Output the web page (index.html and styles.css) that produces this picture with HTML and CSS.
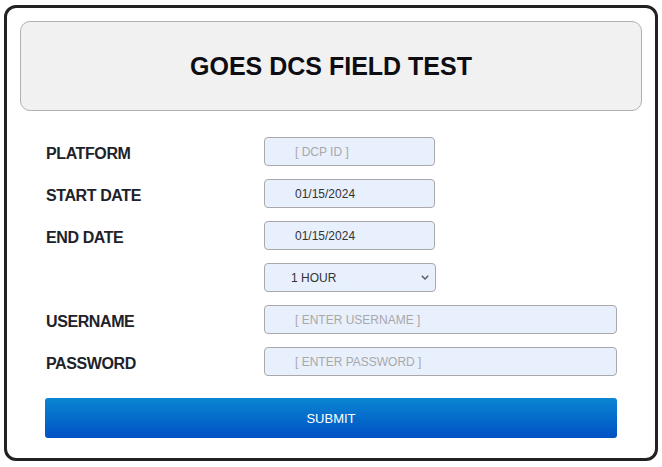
FILE: index.html
```html
<!DOCTYPE html>
<html lang="en">
<head>
<meta charset="utf-8">
<title>GOES DCS Field Test</title>
<link rel="stylesheet" href="styles.css">
</head>
<body>
<div class="card">
  <div class="header">
    <h1 class="title">GOES DCS FIELD TEST</h1>
  </div>
  <form class="form">
    <label class="label" for="platform">PLATFORM</label>
    <input class="field short" id="platform" type="text" placeholder="[ DCP ID ]">

    <label class="label" for="start">START DATE</label>
    <input class="field short" id="start" type="text" value="01/15/2024">

    <label class="label" for="end">END DATE</label>
    <input class="field short" id="end" type="text" value="01/15/2024">

    <span class="label"></span>
    <span class="select-wrap">
      <select class="field select" id="duration">
        <option>1 HOUR</option>
        <option>2 HOURS</option>
        <option>6 HOURS</option>
        <option>12 HOURS</option>
        <option>24 HOURS</option>
      </select>
      <svg class="chevron" width="8" height="5" viewBox="0 0 8 5" aria-hidden="true"><path d="M0.8 0.8 L4 4 L7.2 0.8" fill="none" stroke="#555" stroke-width="1.3"/></svg>
    </span>

    <label class="label" for="user">USERNAME</label>
    <input class="field wide" id="user" type="text" placeholder="[ ENTER USERNAME ]">

    <label class="label" for="pass">PASSWORD</label>
    <input class="field wide" id="pass" type="password" placeholder="[ ENTER PASSWORD ]">

    <button class="submit" type="button">SUBMIT</button>
  </form>
</div>
</body>
</html>
```

FILE: styles.css
```css
* { box-sizing: border-box; }

html, body {
  margin: 0;
  background: #ffffff;
}

body {
  padding: 5px 4px 0 4px;
  font-family: "Liberation Sans", Arial, sans-serif;
}

.card {
  width: 654px;
  border: 3px solid #222222;
  border-radius: 12px;
  padding: 13px 13px 20px 13px;
  background: #ffffff;
}

.header {
  height: 90px;
  border: 1px solid #b0b0b0;
  border-radius: 10px;
  background: #f1f1f1;
  display: flex;
  align-items: center;
  justify-content: center;
}

.title {
  margin: 0;
  font-size: 25px;
  font-weight: 700;
  color: #0d0d12;
  line-height: 1;
}

.form {
  display: grid;
  grid-template-columns: 219px 1fr;
  row-gap: 13px;
  align-items: center;
  padding: 26px 25px 0 25px;
}

.label {
  font-size: 16px;
  font-weight: 700;
  letter-spacing: -0.4px;
  color: #20222a;
  padding: 4px 0 0 1px;
}

.field {
  height: 29px;
  border: 1px solid #a9a9a9;
  border-radius: 4px;
  background: #e8f0fe;
  font-family: "Liberation Sans", Arial, sans-serif;
  font-size: 12px;
  color: #333333;
  padding: 0 0 0 30px;
  margin: 0;
  outline: none;
}

.field::placeholder {
  color: #a8a8a8;
}

.short { width: 171px; }
.wide { width: 100%; }

.select-wrap {
  position: relative;
  width: 172px;
  height: 29px;
}

.select {
  width: 172px;
  appearance: none;
  -webkit-appearance: none;
  padding-left: 26px;
}

.chevron {
  position: absolute;
  right: 7px;
  top: 12px;
}

.submit {
  grid-column: 1 / -1;
  margin-top: 9px;
  height: 40px;
  width: 100%;
  border: none;
  border-radius: 3px;
  background: linear-gradient(#0a86d2, #0051c4);
  color: #ffffff;
  font-family: "Liberation Sans", Arial, sans-serif;
  font-size: 13px;
  cursor: pointer;
}
```
